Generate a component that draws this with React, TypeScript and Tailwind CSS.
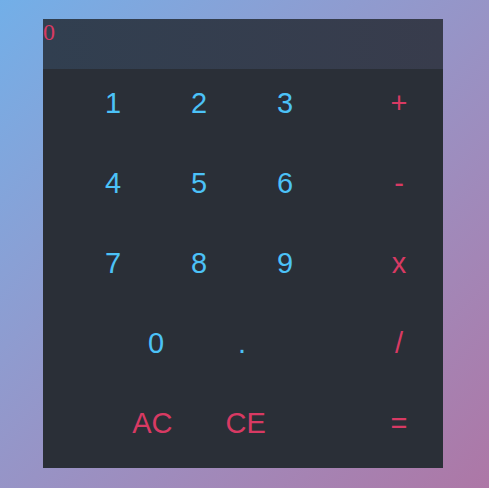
import React from 'react';

const digitRows = [
  { keys: ['1', '2', '3'], op: '+' },
  { keys: ['4', '5', '6'], op: '-' },
  { keys: ['7', '8', '9'], op: 'x' },
];

export default function App() {
  return (
    <div className="h-[488px] w-full bg-gradient-to-br from-[#72afe8] to-[#ad77a6] pt-[19px]">
      <div className="ml-[43px] w-[400px]">
        {/* display */}
        <div className="h-[50px] bg-gradient-to-r from-[#313f50] to-[#383c4c]">
          <div className="font-['Liberation_Serif'] text-[24px] leading-[27px] text-[#d83a63]">0</div>
        </div>

        {/* keypad */}
        <div className="flex h-[399px] flex-col gap-[48px] bg-[#2a2f37] pb-[29px] pt-[18px] font-['Liberation_Sans',Arial,sans-serif] text-[29px] leading-[32px]">
          {digitRows.map((row) => (
            <div key={row.op} className="flex">
              <div className="ml-[27px] flex w-[258px]">
                {row.keys.map((k) => (
                  <button key={k} className="w-[86px] text-center text-[#4cc2f7]">
                    {k}
                  </button>
                ))}
              </div>
              <button className="ml-auto w-[88px] text-center text-[#d83a63]">{row.op}</button>
            </div>
          ))}

          <div className="flex">
            <div className="ml-[27px] flex w-[258px] justify-center">
              <button className="w-[86px] text-center text-[#4cc2f7]">0</button>
              <button className="w-[86px] text-center text-[#4cc2f7]">.</button>
            </div>
            <button className="ml-auto w-[88px] text-center text-[#d83a63]">/</button>
          </div>

          <div className="flex">
            <div className="ml-[27px] flex w-[258px] justify-center gap-[53px]">
              <button className="text-[#d83a63]">AC</button>
              <button className="text-[#d83a63]">CE</button>
            </div>
            <button className="ml-auto w-[88px] text-center text-[#d83a63]">=</button>
          </div>
        </div>
      </div>
    </div>
  );
}
